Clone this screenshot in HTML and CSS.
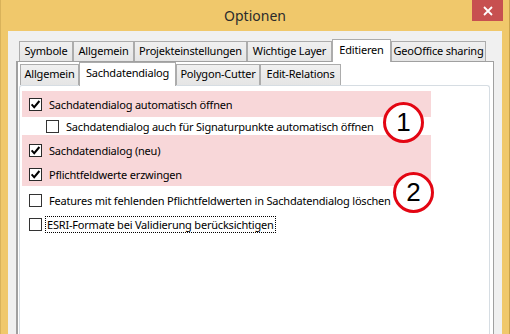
FILE: index.html
```html
<!DOCTYPE html>
<html lang="de">
<head>
    <meta charset="UTF-8">
    <title>Optionen</title>
    <link rel="stylesheet" href="styles.css">
</head>
<body>
    <div class="window">
        <div class="titlebar">
            <span></span>
            <div class="title">Optionen</div>
            <div class="close">
                <svg width="10" height="10" viewBox="0 0 10 10"><path d="M1 1 L9 9 M9 1 L1 9" stroke="#fff" stroke-width="1.8"/></svg>
            </div>
        </div>

        <div class="client">
            <!-- obere Reiter -->
            <div class="tabs top-tabs">
                <div class="tab t-symbole">Symbole</div>
                <div class="tab t-allgemein">Allgemein</div>
                <div class="tab t-projekt">Projekteinstellungen</div>
                <div class="tab t-layer">Wichtige Layer</div>
                <div class="tab t-editieren active">Editieren</div>
                <div class="tab t-geooffice">GeoOffice sharing</div>
            </div>

            <div class="panel">
                <!-- untere Reiter -->
                <div class="tabs sub-tabs">
                    <div class="tab s-allgemein">Allgemein</div>
                    <div class="tab s-sachdaten active">Sachdatendialog</div>
                    <div class="tab s-polygon">Polygon-Cutter</div>
                    <div class="tab s-relations">Edit-Relations</div>
                </div>

                <div class="inner-panel">
                    <div class="list">
                        <div class="hl hl-first">
                            <div class="row">
                                <span class="box checked"><svg width="11" height="11" viewBox="0 0 11 11"><path d="M1.6 5.4 L4.2 8.2 L9.4 2" fill="none" stroke="#000" stroke-width="2"/></svg></span>
                                <span class="label">Sachdatendialog automatisch öffnen</span>
                            </div>
                        </div>
                        <div class="row sub short">
                            <span class="box"></span>
                            <span class="label">Sachdatendialog auch für Signaturpunkte automatisch öffnen</span>
                        </div>
                        <div class="hl hl-second">
                            <div class="row">
                                <span class="box checked"><svg width="11" height="11" viewBox="0 0 11 11"><path d="M1.6 5.4 L4.2 8.2 L9.4 2" fill="none" stroke="#000" stroke-width="2"/></svg></span>
                                <span class="label">Sachdatendialog (neu)</span>
                            </div>
                            <div class="row">
                                <span class="box checked"><svg width="11" height="11" viewBox="0 0 11 11"><path d="M1.6 5.4 L4.2 8.2 L9.4 2" fill="none" stroke="#000" stroke-width="2"/></svg></span>
                                <span class="label">Pflichtfeldwerte erzwingen</span>
                            </div>
                        </div>
                        <div class="row after-hl">
                            <span class="box"></span>
                            <span class="label">Features mit fehlenden Pflichtfeldwerten in Sachdatendialog löschen</span>
                        </div>
                        <div class="row">
                            <span class="box"></span>
                            <span class="label focus">ESRI-Formate bei Validierung berücksichtigen</span>
                        </div>
                    </div>

                    <div class="marker marker-1">1</div>
                    <div class="marker marker-2">2</div>
                </div>
            </div>
        </div>
    </div>
</body>
</html>
```

FILE: styles.css
```css
* {
    box-sizing: border-box;
}

html, body {
    margin: 0;
    padding: 0;
}

body {
    width: 510px;
    height: 334px;
    overflow: hidden;
    background-color: #f0c86b;
    font-family: "Noto Sans", "Liberation Sans", sans-serif;
    font-size: 11px;
    letter-spacing: -0.2px;
    color: #000;
}

.window {
    height: 334px;
    display: flex;
    flex-direction: column;
    border-left: 1px solid #d9b25a;
    border-right: 1px solid #c9a24c;
}

/* Titelleiste */
.titlebar {
    height: 31px;
    display: grid;
    grid-template-columns: 1fr auto 1fr;
    align-items: start;
}

.title {
    font-size: 14px;
    letter-spacing: 0;
    color: #2b2b2b;
    padding-top: 6px;
}

.close {
    justify-self: end;
    width: 31px;
    height: 21px;
    margin-right: 6px;
    background-color: #c75050;
    display: flex;
    justify-content: center;
    align-items: center;
}

/* Fensterinhalt */
.client {
    flex: 1;
    margin: 0 7px 0 7px;
    background-color: #f0f0f0;
    padding-top: 8px;
    display: flex;
    flex-direction: column;
    min-height: 0;
}

.tabs {
    display: flex;
    align-items: flex-end;
    position: relative;
    z-index: 1;
}

.tab {
    height: 20px;
    border: 1px solid #acacac;
    border-bottom: none;
    background: linear-gradient(#f0f0f0, #e5e5e5);
    text-align: center;
    line-height: 18px;
    white-space: nowrap;
}

.tab.active {
    background: #fff;
    height: 23px;
    margin-bottom: -1px;
    line-height: 19px;
}

.top-tabs {
    padding-left: 11px;
    height: 22px;
}

.t-symbole { width: 54px; }
.t-allgemein { width: 61px; }
.t-projekt { width: 113px; }
.t-layer { width: 85px; }
.t-editieren { width: 59px; }
.t-geooffice { width: 95px; }

.panel {
    flex: 1;
    margin: 0 8px 0 8px;
    border: 1px solid #a0a0a0;
    border-bottom: none;
    border-left-width: 2px;
    background-color: #fff;
    padding: 0 3px 0 1px;
    display: flex;
    flex-direction: column;
}

.sub-tabs {
    height: 23px;
}

.sub-tabs .tab {
    height: 21px;
}

.sub-tabs .tab.active {
    height: 24px;
}

.s-allgemein { width: 59px; margin-left: 1px; }
.s-sachdaten { width: 97px; }
.s-polygon { width: 84px; }
.s-relations { width: 81px; }

.inner-panel {
    flex: 1;
    position: relative;
    border: 1px solid #d6dde3;
    border-bottom: none;
    border-radius: 3px 3px 0 0;
    background-color: #fff;
}

/* Optionen */
.list {
    padding: 5px 0 0 2px;
}

.hl {
    width: 409px;
    background-color: #f8d7d9;
}

.hl-first {
    padding: 1px 0 1px 0;
}

.hl-second {
    padding: 3px 0 0 0;
}

.row {
    height: 24px;
    display: flex;
    align-items: center;
    padding-left: 7px;
    white-space: nowrap;
}

.row.short {
    height: 18px;
}

.row.sub {
    padding-left: 24px;
}

.row.after-hl {
    margin-top: 2px;
}

.box {
    width: 13px;
    height: 13px;
    border: 1px solid #333;
    background-color: #fff;
    margin-right: 5px;
    flex-shrink: 0;
    display: flex;
    justify-content: center;
    align-items: center;
}

.box.checked {
    border-color: #2a2a2a;
}

.label {
    padding: 0 1px;
    border: 1px solid transparent;
}

.label.focus {
    border: 1px dotted #000;
    margin-left: -2px;
}

/* Markierungen */
.marker {
    position: absolute;
    width: 41px;
    height: 41px;
    border: 3px solid #e30613;
    border-radius: 50%;
    background-color: #fff;
    font-family: "Liberation Sans", Arial, sans-serif;
    font-size: 26px;
    letter-spacing: 0;
    line-height: 35px;
    text-align: center;
    color: #000;
}

.marker-1 {
    left: 363px;
    top: 16px;
}

.marker-2 {
    left: 373px;
    top: 86px;
}
```
